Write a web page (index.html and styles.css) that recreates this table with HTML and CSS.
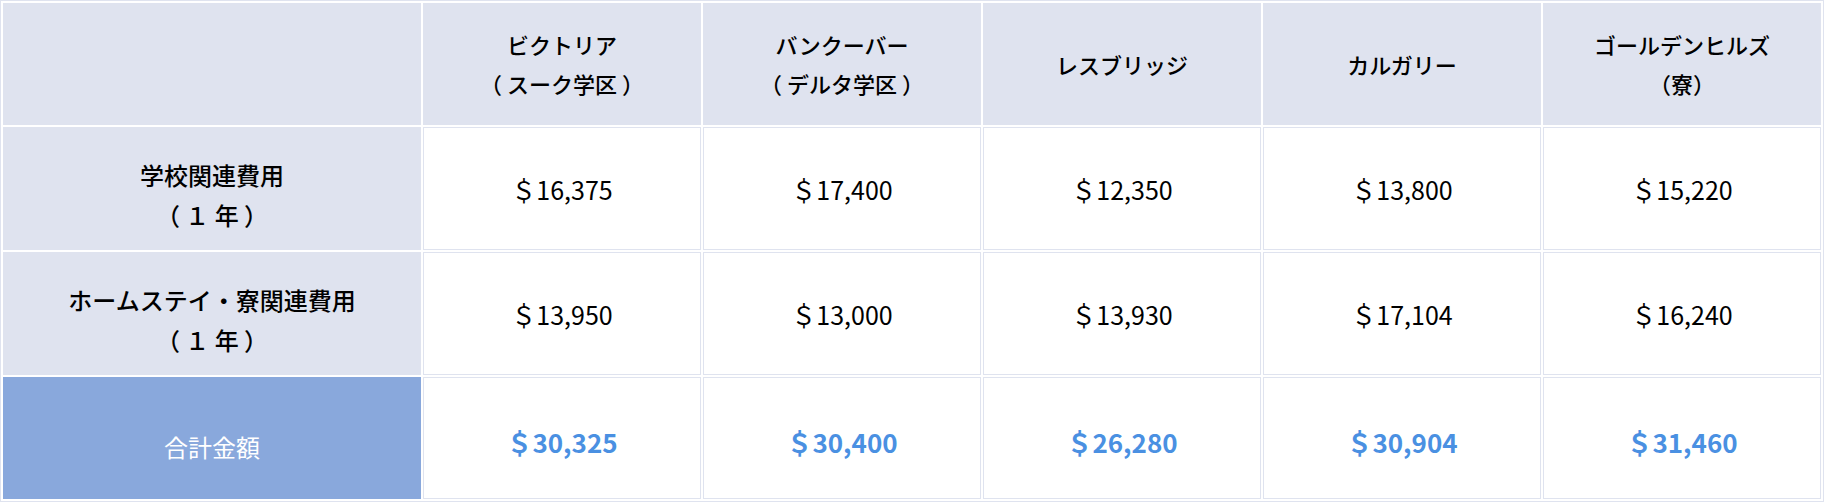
FILE: index.html
```html
<!DOCTYPE html>
<html lang="ja">
<head>
<meta charset="utf-8">
<title>費用比較</title>
<link rel="stylesheet" href="styles.css">
</head>
<body>
<table class="cost-table">
  <colgroup>
    <col class="col-label">
    <col class="col-city">
    <col class="col-city">
    <col class="col-city">
    <col class="col-city">
    <col class="col-city">
  </colgroup>
  <thead>
    <tr class="row-head">
      <th class="corner"></th>
      <th class="city">ビクトリア<br>（ スーク学区 ）</th>
      <th class="city">バンクーバー<br>（ デルタ学区 ）</th>
      <th class="city">レスブリッジ</th>
      <th class="city">カルガリー</th>
      <th class="city">ゴールデンヒルズ<br>（寮）</th>
    </tr>
  </thead>
  <tbody>
    <tr class="row-body">
      <th class="label">学校関連費用<br>（ １ 年 ）</th>
      <td class="amount">＄16,375</td>
      <td class="amount">＄17,400</td>
      <td class="amount">＄12,350</td>
      <td class="amount">＄13,800</td>
      <td class="amount">＄15,220</td>
    </tr>
    <tr class="row-body">
      <th class="label">ホームステイ・寮関連費用<br>（ １ 年 ）</th>
      <td class="amount">＄13,950</td>
      <td class="amount">＄13,000</td>
      <td class="amount">＄13,930</td>
      <td class="amount">＄17,104</td>
      <td class="amount">＄16,240</td>
    </tr>
    <tr class="row-total">
      <th class="label total-label">合計金額</th>
      <td class="amount total">＄30,325</td>
      <td class="amount total">＄30,400</td>
      <td class="amount total">＄26,280</td>
      <td class="amount total">＄30,904</td>
      <td class="amount total">＄31,460</td>
    </tr>
  </tbody>
</table>
</body>
</html>
```
FILE: styles.css
```css
html, body {
  margin: 0;
  padding: 0;
  background: #ffffff;
}

body {
  font-family: "Noto Sans CJK JP", "Noto Sans", sans-serif;
  color: #111111;
}

.cost-table {
  width: 1824px;
  table-layout: fixed;
  border-collapse: separate;
  border-spacing: 2px;
  border: 1px solid #dfe3ef;
  background: #ffffff;
}

.col-label {
  width: 418px;
}

.col-city {
  width: 278px;
}

.cost-table th,
.cost-table td {
  box-sizing: border-box;
  border: 1px solid #dfe3ef;
  padding: 0;
  text-align: center;
  vertical-align: middle;
}

.row-head th {
  height: 122px;
  background: #dfe3ef;
  font-size: 22px;
  font-weight: 500;
  line-height: 39px;
  color: #000000;
}

.row-body th,
.row-body td {
  height: 123px;
}

.row-total th,
.row-total td {
  height: 122px;
}

.label {
  background: #dfe3ef;
  font-size: 24px;
  font-weight: 500;
  line-height: 40px;
  padding-top: 12px !important;
  color: #000000;
}

.total-label {
  background: #89a8dc;
  border-color: #89a8dc !important;
  color: #ffffff;
  font-weight: 400;
  padding-top: 18px !important;
}

.amount {
  background: #ffffff;
  font-size: 25px;
  font-weight: 400;
  line-height: 32px;
  color: #000000;
}

.total {
  color: #4a90e2;
  font-size: 26px;
  font-weight: 700;
  padding-top: 8px !important;
}
```
